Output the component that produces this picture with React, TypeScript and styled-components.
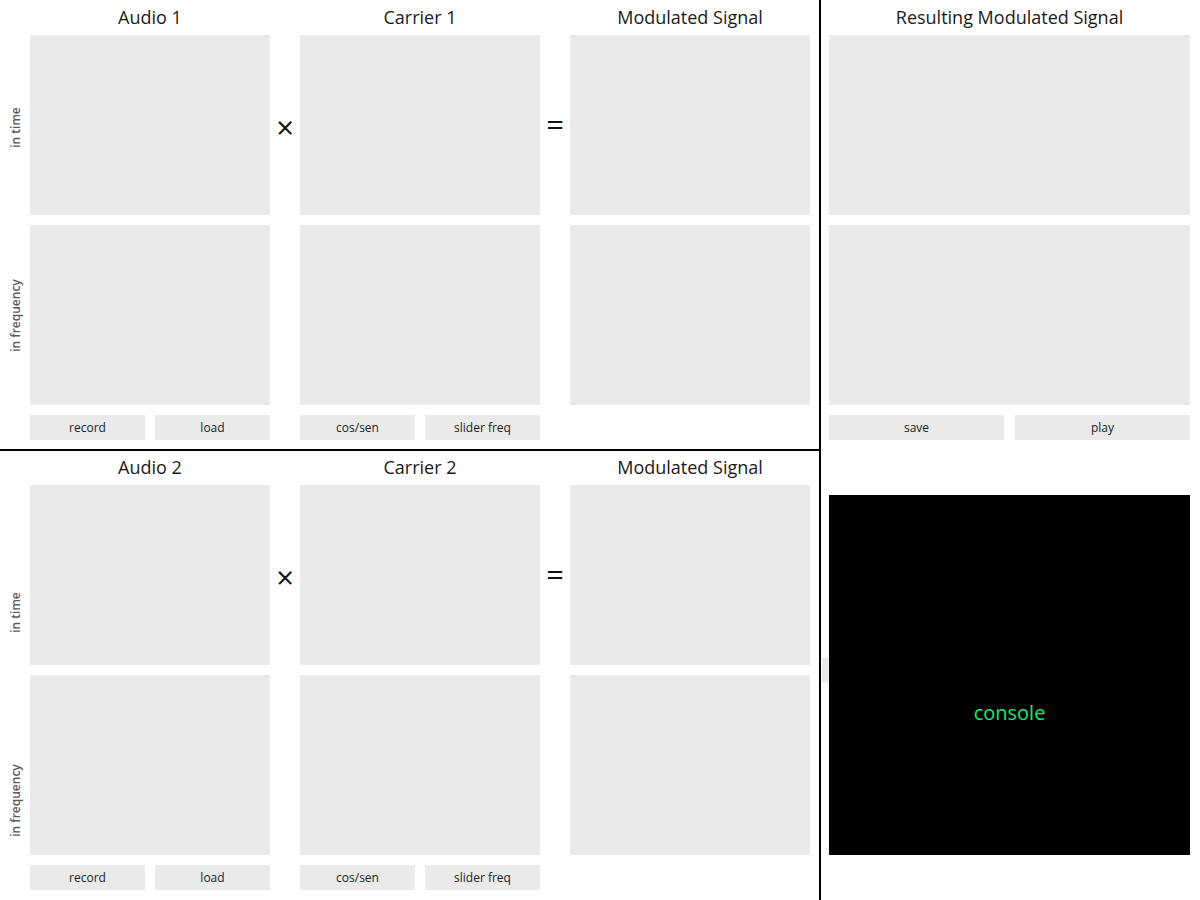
import styled, { createGlobalStyle } from "styled-components";

const Global = createGlobalStyle`
  html, body {
    margin: 0;
    padding: 0;
    background: #ffffff;
  }
  body {
    font-family: "Open Sans", "Liberation Sans", sans-serif;
    color: #1a1a1a;
  }
`;

const Page = styled.div`
  display: flex;
  width: 1200px;
  height: 900px;
  overflow: hidden;
`;

const Left = styled.div`
  width: 819px;
  display: flex;
  flex-direction: column;
  border-right: 2px solid #000;
`;

const Half = styled.div<{ $bottom?: boolean }>`
  height: ${(p) => (p.$bottom ? 450 : 451)}px;
  box-sizing: border-box;
  display: grid;
  grid-template-columns: 30px 240px 30px 240px 30px 240px;
  grid-template-rows: 25px 180px 180px 25px;
  row-gap: 10px;
  ${(p) => (p.$bottom ? "margin-top: -1px;" : "border-bottom: 2px solid #000;")}
`;

const TitleCell = styled.div`
  display: flex;
  align-items: flex-start;
  justify-content: center;
  font-size: 18px;
  line-height: 35px;
  height: 25px;
  white-space: nowrap;
`;

const Plot = styled.div`
  background: #eaeaea;
`;

const SideLabel = styled.div<{ $shift: number }>`
  display: flex;
  align-items: center;
  justify-content: center;
  span {
    transform: translateY(${(p) => p.$shift}px) rotate(-90deg);
    white-space: nowrap;
    font-size: 12px;
    font-weight: 600;
    color: #5c5c5c;
  }
`;

const Operator = styled.div<{ $shift: number }>`
  display: flex;
  align-items: center;
  justify-content: center;
  font-size: 31px;
  line-height: 1;
  color: #111;
  span {
    transform: translateY(${(p) => p.$shift}px);
  }
`;

const ButtonRow = styled.div<{ $gap: number }>`
  display: grid;
  grid-template-columns: 1fr 1fr;
  column-gap: ${(p) => p.$gap}px;
`;

const Btn = styled.div`
  background: #eaeaea;
  font-size: 12px;
  color: #222;
  display: flex;
  align-items: center;
  justify-content: center;
  height: 25px;
`;

const Right = styled.div`
  flex: 1;
  padding: 0 10px 0 8px;
  display: flex;
  flex-direction: column;
`;

const RightStack = styled.div`
  display: grid;
  grid-template-rows: 25px 180px 180px 25px;
  row-gap: 10px;
`;

const ConsoleWrap = styled.div`
  position: relative;
  margin-top: 55px;
  height: 360px;
`;

const Peek = styled.div`
  position: absolute;
  left: -7px;
  top: 163px;
  width: 7px;
  height: 25px;
  background: #eaeaea;
`;

const Console = styled.div`
  height: 100%;
  background: #000;
  display: flex;
  align-items: center;
  justify-content: center;
  color: #1ee66c;
  font-size: 20px;
  padding-top: 74px;
  box-sizing: border-box;
`;

type HalfProps = { audio: string; carrier: string; bottom?: boolean };

function SignalHalf({ audio, carrier, bottom }: HalfProps) {
  const labelShift = bottom ? 35 : 0;
  return (
    <Half $bottom={bottom}>
      <div />
      <TitleCell>{audio}</TitleCell>
      <div />
      <TitleCell>{carrier}</TitleCell>
      <div />
      <TitleCell>Modulated Signal</TitleCell>

      <SideLabel $shift={labelShift + 2}>
        <span>in time</span>
      </SideLabel>
      <Plot />
      <Operator $shift={2}>
        <span>×</span>
      </Operator>
      <Plot />
      <Operator $shift={-1}>
        <span>=</span>
      </Operator>
      <Plot />

      <SideLabel $shift={labelShift}>
        <span>in frequency</span>
      </SideLabel>
      <Plot />
      <div />
      <Plot />
      <div />
      <Plot />

      <div />
      <ButtonRow $gap={10}>
        <Btn>record</Btn>
        <Btn>load</Btn>
      </ButtonRow>
      <div />
      <ButtonRow $gap={10}>
        <Btn>cos/sen</Btn>
        <Btn>slider freq</Btn>
      </ButtonRow>
      <div />
      <div />
    </Half>
  );
}

export default function App() {
  return (
    <>
      <Global />
      <Page>
        <Left>
          <SignalHalf audio="Audio 1" carrier="Carrier 1" />
          <SignalHalf audio="Audio 2" carrier="Carrier 2" bottom />
        </Left>
        <Right>
          <RightStack>
            <TitleCell>Resulting Modulated Signal</TitleCell>
            <Plot />
            <Plot />
            <ButtonRow $gap={11}>
              <Btn>save</Btn>
              <Btn>play</Btn>
            </ButtonRow>
          </RightStack>
          <ConsoleWrap>
            <Peek />
            <Console>console</Console>
          </ConsoleWrap>
        </Right>
      </Page>
    </>
  );
}
